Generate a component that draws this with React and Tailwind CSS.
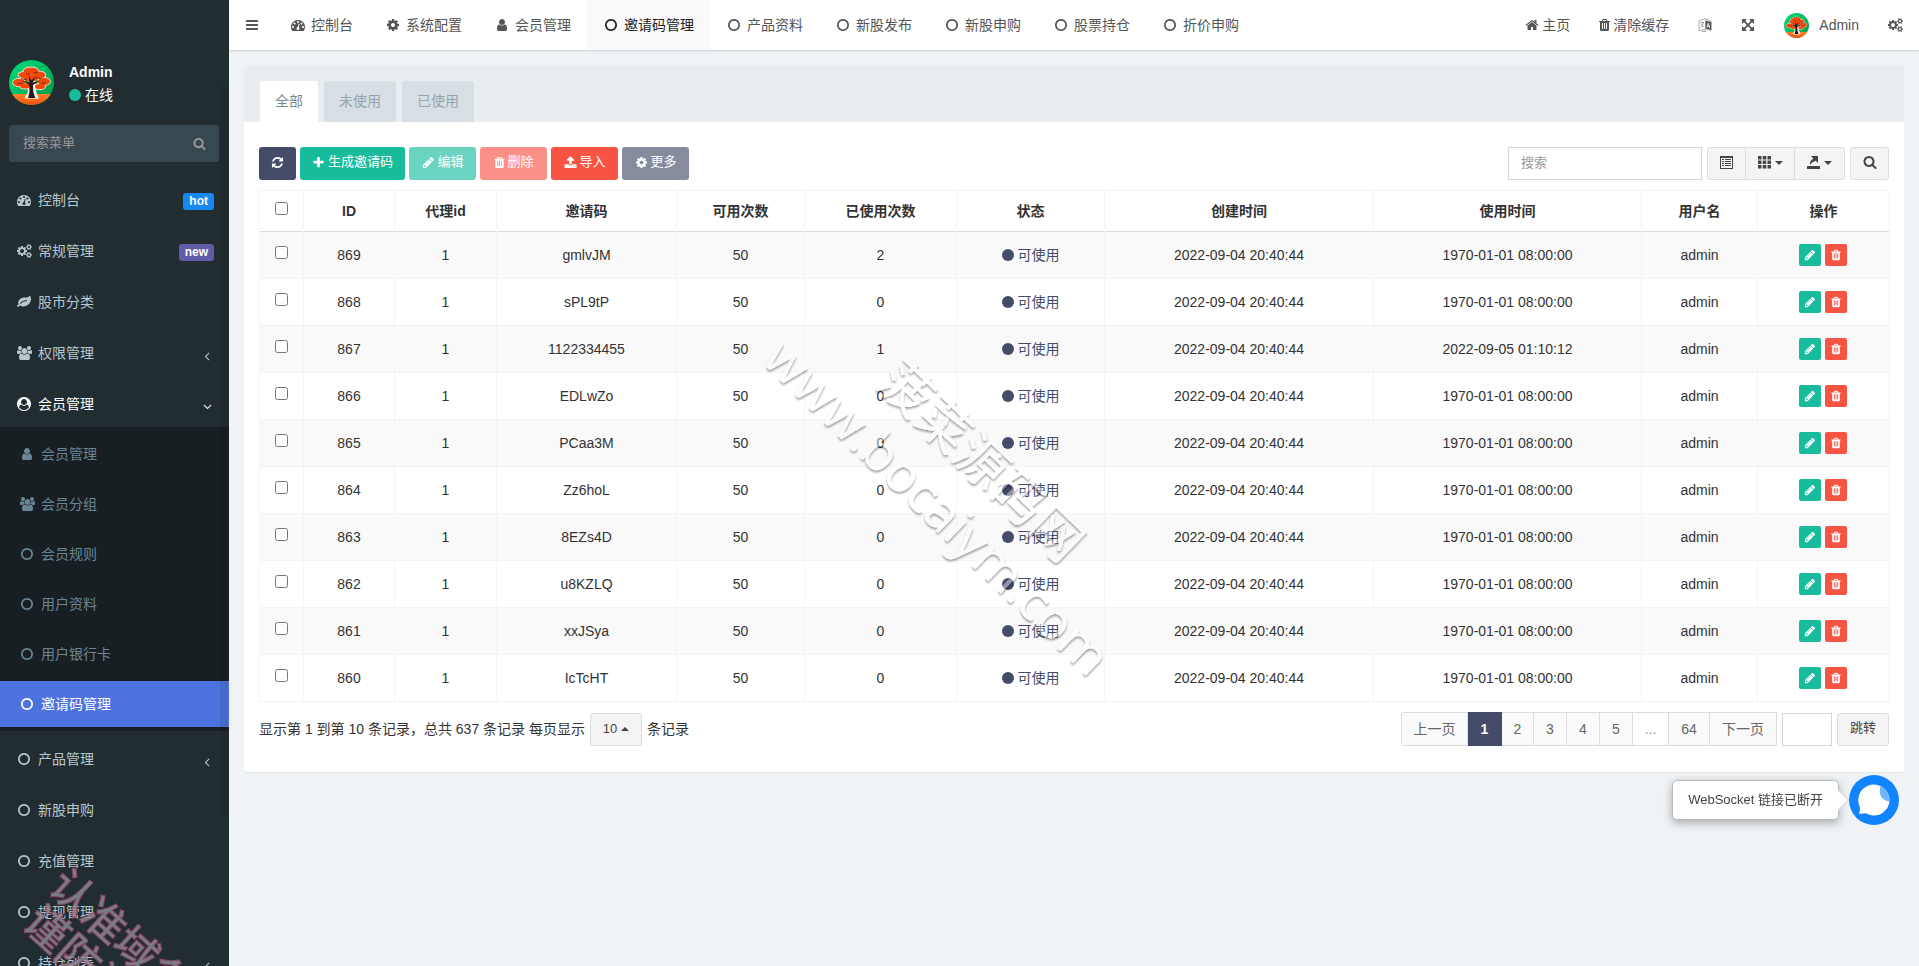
import { useState } from 'react';
import clsx from 'clsx';

// 14px wide glyphs on a 1792 unit grid
const PATHS = {
  dashboard: 'M384 1152q0-53-37.5-90.5t-90.5-37.5-90.5 37.5-37.5 90.5 37.5 90.5 90.5 37.5 90.5-37.5 37.5-90.5zm192-448q0-53-37.5-90.5t-90.5-37.5-90.5 37.5-37.5 90.5 37.5 90.5 90.5 37.5 90.5-37.5 37.5-90.5zm428 481l101-382q6-26-7.5-48.5t-38.5-29.5-48 6.5-30 39.5l-101 382q-60 5-107 43.5t-63 98.5q-20 77 20 146t117 89 146-20 89-117q16-60-6-117t-72-91zm660-33q0-53-37.5-90.5t-90.5-37.5-90.5 37.5-37.5 90.5 37.5 90.5 90.5 37.5 90.5-37.5 37.5-90.5zm-640-640q0-53-37.5-90.5t-90.5-37.5-90.5 37.5-37.5 90.5 37.5 90.5 90.5 37.5 90.5-37.5 37.5-90.5zm448 192q0-53-37.5-90.5t-90.5-37.5-90.5 37.5-37.5 90.5 37.5 90.5 90.5 37.5 90.5-37.5 37.5-90.5zm320 448q0 261-141 483-19 29-54 29h-1402q-35 0-54-29-141-221-141-483 0-182 71-348t191-286 286-191 348-71 348 71 286 191 191 286 71 348z',
  cog: 'M1152 896q0-106-75-181t-181-75-181 75-75 181 75 181 181 75 181-75 75-181zm512-109v222q0 12-8 23t-20 13l-185 28q-19 54-39 91 35 50 107 138 10 12 10 25t-9 23q-27 37-99 108t-94 71q-12 0-26-9l-138-108q-44 23-91 38-16 136-29 186-7 28-36 28h-222q-14 0-24.5-8.5t-11.5-21.5l-28-184q-49-16-90-37l-141 107q-10 9-25 9-14 0-25-11-126-114-165-168-7-10-7-23 0-12 8-23 15-21 51-66.5t54-70.5q-27-50-41-99l-183-27q-13-2-21-12.5t-8-23.5v-222q0-12 8-23t19-13l186-28q14-46 39-92-40-57-107-138-10-12-10-24 0-10 9-23 26-36 98.5-107.5t94.5-71.5q13 0 26 10l138 107q44-23 91-38 16-136 29-186 7-28 36-28h222q14 0 24.5 8.5t11.5 21.5l28 184q49 16 90 37l142-107q9-9 24-9 13 0 25 10 129 119 165 170 7 8 7 22 0 12-8 23-15 21-51 66.5t-54 70.5q26 50 41 98l183 28q13 2 21 12.5t8 23.5z',
  cogs: 'M896 896q0-106-75-181t-181-75-181 75-75 181 75 181 181 75 181-75 75-181zm768 512q0-52-38-90t-90-38-90 38-38 90q0 53 37.5 90.5t90.5 37.5 90.5-37.5 37.5-90.5zm0-1024q0-52-38-90t-90-38-90 38-38 90q0 53 37.5 90.5t90.5 37.5 90.5-37.5 37.5-90.5zm-384 421v185q0 10-7 19.5t-16 10.5l-155 24q-11 35-32 76 34 48 90 115 7 11 7 20 0 12-7 19-23 30-82.5 89.5t-78.5 59.5q-11 0-21-7l-115-90q-37 19-77 31-11 108-23 155-7 24-30 24h-186q-11 0-20-7.5t-10-17.5l-23-153q-34-10-75-31l-118 89q-7 7-20 7-11 0-21-8-144-133-144-160 0-9 7-19 10-14 41-53t47-61q-23-44-35-82l-152-24q-10-1-17-9.5t-7-19.5v-185q0-10 7-19.5t16-10.5l155-24q11-35 32-76-34-48-90-115-7-11-7-20 0-12 7-20 22-30 82-89t79-59q11 0 21 7l115 90q34-18 77-32 11-108 23-154 7-24 30-24h186q11 0 20 7.5t10 17.5l23 153q34 10 75 31l118-89q8-7 20-7 11 0 21 8 144 133 144 160 0 8-7 19-12 16-42 54t-45 60q23 48 34 82l152 23q10 2 17 10.5t7 19.5zm640 533v140q0 16-149 31-12 27-30 52 51 113 51 138 0 4-4 7-122 71-124 71-8 0-46-47t-52-68q-20 2-30 2t-30-2q-14 21-52 68t-46 47q-2 0-124-71-4-3-4-7 0-25 51-138-18-25-30-52-149-15-149-31v-140q0-16 149-31 13-29 30-52-51-113-51-138 0-4 4-7 4-2 35-20t59-34 30-16q8 0 46 46.5t52 67.5q20-2 30-2t30 2q51-71 92-112l6-2q4 0 124 70 4 3 4 7 0 25-51 138 17 23 30 52 149 15 149 31zm0-1024v140q0 16-149 31-12 27-30 52 51 113 51 138 0 4-4 7-122 71-124 71-8 0-46-47t-52-68q-20 2-30 2t-30-2q-14 21-52 68t-46 47q-2 0-124-71-4-3-4-7 0-25 51-138-18-25-30-52-149-15-149-31v-140q0-16 149-31 13-29 30-52-51-113-51-138 0-4 4-7 4-2 35-20t59-34 30-16q8 0 46 46.5t52 67.5q20-2 30-2t30 2q51-71 92-112l6-2q4 0 124 70 4 3 4 7 0 25-51 138 17 23 30 52 149 15 149 31z',
  leaf: 'M1280 704q0-26-19-45t-45-19q-172 0-318 49.5t-259.5 134-235.5 219.5q-19 21-19 45 0 26 19 45t45 19q24 0 45-19 27-24 74-71t67-66q137-124 268.5-176t313.5-52q26 0 45-19t19-45zm512-198q0 95-20 193-46 224-184.5 383t-357.5 268q-214 108-438 108-148 0-286-47-15-5-88-42t-96-37q-16 0-39.5 32t-45 70-52.5 70-60 32q-43 0-63.5-17.5t-45.5-59.5q-2-4-6-11t-5.5-10-3-9.5-1.5-13.5q0-35 31-73.5t68-65.5 68-56 31-48q0-4-14-38t-16-44q-9-51-9-104 0-115 43.5-220t119-184.5 170.5-139 204-95.5q55-18 145-25.5t179.5-9 178.5-6 163.5-24 113.5-56.5l29.5-29.5 29.5-28 27-20 36.5-16 43.5-4.5q39 0 70.5 46t47.5 112 24 124 8 96z',
  users: 'M657 896q-162 5-265 128h-134q-82 0-138-40.5t-56-118.5q0-353 124-353 6 0 43.5 21t97.5 42.5 119 21.5q67 0 133-23-5 37-5 66 0 159 90 256zm1071 637q0 120-73 189.5t-194 69.5h-874q-121 0-194-69.5t-73-189.5q0-53 3.5-103.5t14-109 26.5-108.5 43-97.5 62-81 85.5-53.5 111.5-20q10 0 43 21.5t73 48 107 48 135 21.5 135-21.5 107-48 73-48 43-21.5q61 0 111.5 20t85.5 53.5 62 81 43 97.5 26.5 108.5 14 109 3.5 103.5zm-1024-1277q0 106-75 181t-181 75-181-75-75-181 75-181 181-75 181 75 75 181zm704 384q0 159-112.5 271.5t-271.5 112.5-271.5-112.5-112.5-271.5 112.5-271.5 271.5-112.5 271.5 112.5 112.5 271.5zm576 225q0 78-56 118.5t-138 40.5h-134q-103-123-265-128 90-97 90-256 0-29-5-66 66 23 133 23 59 0 119-21.5t97.5-42.5 43.5-21q124 0 124 353zm-128-609q0 106-75 181t-181 75-181-75-75-181 75-181 181-75 181 75 75 181z',
  user: 'M1536 1399q0 109-62.5 187t-150.5 78h-854q-88 0-150.5-78t-62.5-187q0-85 8.5-160.5t31.5-152 58.5-131 94-89 134.5-34.5q131 128 313 128t313-128q76 0 134.5 34.5t94 89 58.5 131 31.5 152 8.5 160.5zm-256-887q0 159-112.5 271.5t-271.5 112.5-271.5-112.5-112.5-271.5 112.5-271.5 271.5-112.5 271.5 112.5 112.5 271.5z',
  userCircle: 'M1523 1339q-22-155-87.5-257.5t-184.5-118.5q-67 74-159.5 115.5t-195.5 41.5-195.5-41.5-159.5-115.5q-119 16-184.5 118.5t-87.5 257.5q106 150 271 237.5t356 87.5 356-87.5 271-237.5zm-243-699q0-159-112.5-271.5t-271.5-112.5-271.5 112.5-112.5 271.5 112.5 271.5 271.5 112.5 271.5-112.5 112.5-271.5zm512 256q0 182-71 347.5t-190.5 286-285.5 191.5-349 71q-182 0-348-71t-286-191-191-286-71-348 71-348 191-286 286-191 348-71 348 71 286 191 191 286 71 348z',
  circle: 'M896 352q-148 0-273 73t-198 198-73 273 73 273 198 198 273 73 273-73 198-198 73-273-73-273-198-198-273-73zm768 544q0 209-103 385.5t-279.5 279.5-385.5 103-385.5-103-279.5-279.5-103-385.5 103-385.5 279.5-279.5 385.5-103 385.5 103 279.5 279.5 103 385.5z',
  refresh: 'M1639 1056q0 5-1 7-64 268-268 434.5t-478 166.5q-146 0-282.5-55t-243.5-157l-129 129q-19 19-45 19t-45-19-19-45v-448q0-26 19-45t45-19h448q26 0 45 19t19 45-19 45l-137 137q71 66 161 102t187 36q134 0 250-65t186-179q11-17 53-117 8-23 30-23h192q13 0 22.5 9.5t9.5 22.5zm25-800v448q0 26-19 45t-45 19h-448q-26 0-45-19t-19-45 19-45l138-138q-148-137-349-137-134 0-250 65t-186 179q-11 17-53 117-8 23-30 23h-199q-13 0-22.5-9.5t-9.5-22.5v-7q65-268 270-434.5t480-166.5q146 0 284 55.5t245 156.5l130-129q19-19 45-19t45 19 19 45z',
  plus: 'M1600 736v192q0 40-28 68t-68 28h-416v416q0 40-28 68t-68 28h-192q-40 0-68-28t-28-68v-416h-416q-40 0-68-28t-28-68v-192q0-40 28-68t68-28h416v-416q0-40 28-68t68-28h192q40 0 68 28t28 68v416h416q40 0 68 28t28 68z',
  pencil: 'M491 1536l91-91-235-235-91 91v107h128v128h107zm523-928q0-22-22-22-10 0-17 7l-542 542q-7 7-7 17 0 22 22 22 10 0 17-7l542-542q7-7 7-17zm-54-192l416 416-832 832h-416v-416zm683 96q0 53-37 90l-166 166-416-416 166-165q36-38 90-38 53 0 91 38l235 234q37 39 37 91z',
  trash: 'M704 1376v-704q0-14-9-23t-23-9h-64q-14 0-23 9t-9 23v704q0 14 9 23t23 9h64q14 0 23-9t9-23zm256 0v-704q0-14-9-23t-23-9h-64q-14 0-23 9t-9 23v704q0 14 9 23t23 9h64q14 0 23-9t9-23zm256 0v-704q0-14-9-23t-23-9h-64q-14 0-23 9t-9 23v704q0 14 9 23t23 9h64q14 0 23-9t9-23zm-544-992h448l-48-117q-7-9-17-11h-317q-10 2-17 11zm928 32v64q0 14-9 23t-23 9h-96v948q0 83-47 143.5t-113 60.5h-832q-66 0-113-58.5t-47-141.5v-952h-96q-14 0-23-9t-9-23v-64q0-14 9-23t23-9h309l70-167q15-37 54-63t79-26h320q40 0 79 26t54 63l70 167h309q14 0 23 9t9 23z',
  upload: 'M1344 1472q0-26-19-45t-45-19-45 19-19 45 19 45 45 19 45-19 19-45zm256 0q0-26-19-45t-45-19-45 19-19 45 19 45 45 19 45-19 19-45zm128-224v320q0 40-28 68t-68 28h-1472q-40 0-68-28t-28-68v-320q0-40 28-68t68-28h427q21 56 70.5 92t110.5 36h256q61 0 110.5-36t70.5-92h427q40 0 68 28t28 68zm-325-648q-17 40-59 40h-256v448q0 26-19 45t-45 19h-256q-26 0-45-19t-19-45v-448h-256q-42 0-59-40-17-39 14-69l448-448q18-19 45-19t45 19l448 448q31 30 14 69z',
  home: 'M1472 992v480q0 26-19 45t-45 19h-384v-384h-256v384h-384q-26 0-45-19t-19-45v-480q0-1 .5-3t.5-3l575-474 575 474q1 2 1 6zm223-69l-62 74q-8 9-21 11h-3q-13 0-21-7l-692-577-692 577q-12 8-24 7-13-2-21-11l-62-74q-8-10-7-23.5t11-21.5l719-599q32-26 76-26t76 26l244 204v-195q0-14 9-23t23-9h192q14 0 23 9t9 23v408l219 182q10 8 11 21.5t-7 23.5z',
  bars: 'M1664 1344v128q0 26-19 45t-45 19h-1408q-26 0-45-19t-19-45v-128q0-26 19-45t45-19h1408q26 0 45 19t19 45zm0-512v128q0 26-19 45t-45 19h-1408q-26 0-45-19t-19-45v-128q0-26 19-45t45-19h1408q26 0 45 19t19 45zm0-512v128q0 26-19 45t-45 19h-1408q-26 0-45-19t-19-45v-128q0-26 19-45t45-19h1408q26 0 45 19t19 45z',
  arrows: 'M1411 541l-355 355 355 355 144-144q29-31 70-14 39 17 39 59v448q0 26-19 45t-45 19h-448q-42 0-59-40-17-39 14-69l144-144-355-355-355 355 144 144q31 30 14 69-17 40-59 40h-448q-26 0-45-19t-19-45v-448q0-42 40-59 39-17 69 14l144 144 355-355-355-355-144 144q-19 19-45 19-12 0-24-5-40-17-40-59v-448q0-26 19-45t45-19h448q42 0 59 40 17 39-14 69l-144 144 355 355 355-355-144-144q-31-30-14-69 17-40 59-40h448q26 0 45 19t19 45v448q0 42-39 59-13 5-25 5-26 0-45-19z',
  search: 'M1216 832q0-185-131.5-316.5t-316.5-131.5-316.5 131.5-131.5 316.5 131.5 316.5 316.5 131.5 316.5-131.5 131.5-316.5zm512 832q0 52-38 90t-90 38q-54 0-90-38l-343-342q-179 124-399 124-143 0-273.5-55.5t-225-150-150-225-55.5-273.5 55.5-273.5 150-225 225-150 273.5-55.5 273.5 55.5 225 150 150 225 55.5 273.5q0 220-124 399l343 343q37 37 37 90z',
  angle: 'M1203 544q0 13-10 23l-393 393 393 393q10 10 10 23t-10 23l-50 50q-10 10-23 10t-23-10l-466-466q-10-10-10-23t10-23l466-466q10-10 23-10t23 10l50 50q10 10 10 23z',
};

const BOXES = {
  cogs: '0 0 1920 1792',
  users: '64 0 1920 1792',
  trash: '192 0 1408 1792',
};

function Icon({ name, className = 'size-[14px]' }) {
  return (
    <svg viewBox={BOXES[name] || '0 0 1792 1792'} fill="currentColor" className={clsx('shrink-0', className)} aria-hidden="true">
      <path d={PATHS[name]} />
    </svg>
  );
}

// Fixed-width slot so labels line up whatever the glyph is
function MenuIcon({ name }) {
  return (
    <span className="flex w-[18px] shrink-0 justify-center">
      <Icon name={name} className={name === 'cogs' || name === 'users' ? 'h-[14px] w-[15px]' : 'size-[14px]'} />
    </span>
  );
}

function Avatar({ id, className }) {
  return (
    <svg viewBox="0 0 45 45" className={clsx('shrink-0 rounded-full', className)} role="img" aria-label="Admin">
      <defs>
        <linearGradient id={`${id}-g`} x1="0" y1="0" x2="1" y2="1">
          <stop offset="0" stopColor="#00e07d" />
          <stop offset="1" stopColor="#009444" />
        </linearGradient>
        <linearGradient id={`${id}-o`} x1="0" y1="0" x2="0" y2="1">
          <stop offset="0" stopColor="#fb8228" />
          <stop offset="1" stopColor="#f0500c" />
        </linearGradient>
      </defs>
      <rect width="45" height="45" fill={`url(#${id}-g)`} />
      <rect y="34" width="45" height="11" fill={`url(#${id}-o)`} />
      <g fill="#fff" stroke="#f6ece0" strokeWidth="1.6" strokeLinejoin="round">
        <ellipse cx="22" cy="11" rx="7.5" ry="3.6" />
        <ellipse cx="15.500" cy="15" rx="6" ry="3.200" />
        <ellipse cx="30" cy="15" rx="6.500" ry="3.500" />
        <ellipse cx="10" cy="22.500" rx="6" ry="3.800" />
        <ellipse cx="35" cy="21.500" rx="6" ry="3.800" />
        <ellipse cx="16" cy="26" rx="5" ry="2.600" />
        <ellipse cx="31" cy="26.500" rx="5" ry="2.600" />
        <path d="M20 20h6l.5 12 2.500 6h-12.500l3-6z" />
      </g>
      <g fill="#f4480b">
        <ellipse cx="22" cy="11" rx="7.500" ry="3.600" />
        <ellipse cx="15.500" cy="15" rx="6" ry="3.200" />
        <ellipse cx="30" cy="15" rx="6.500" ry="3.500" />
        <ellipse cx="22" cy="18" rx="7" ry="3.600" />
        <ellipse cx="10" cy="22.500" rx="6" ry="3.800" />
        <ellipse cx="35" cy="21.500" rx="6" ry="3.800" />
        <ellipse cx="16" cy="26" rx="5" ry="2.600" />
        <ellipse cx="31" cy="26.500" rx="5" ry="2.600" />
      </g>
      <path d="M19 38l1.500-6-.3-7-7-4.500 7 2-.2-7 2 5 5-4-3.500 6 8-2-7.500 4.500.3 7 2 6z" fill="#231815" />
      <path d="M12 18.500l6 1.500M27 17l5 2M17 13l4 2M25 13l4-1M8 24l6-1M32 24l5-2" stroke="#5a2415" strokeWidth=".8" />
    </svg>
  );
}

const Caret = ({ up }) => (
  <span
    className={clsx(
      'inline-block size-0 border-x-4 border-x-transparent',
      up ? 'border-b-4 border-b-current' : 'border-t-4 border-t-current'
    )}
  />
);

const mainMenu = [
  { label: '控制台', icon: 'dashboard', badge: 'hot' },
  { label: '常规管理', icon: 'cogs', badge: 'new' },
  { label: '股市分类', icon: 'leaf' },
  { label: '权限管理', icon: 'users', arrow: true },
  {
    label: '会员管理',
    icon: 'userCircle',
    open: true,
    children: [
      { label: '会员管理', icon: 'user' },
      { label: '会员分组', icon: 'users' },
      { label: '会员规则', icon: 'circle' },
      { label: '用户资料', icon: 'circle' },
      { label: '用户银行卡', icon: 'circle' },
      { label: '邀请码管理', icon: 'circle', active: true },
    ],
  },
  { label: '产品管理', icon: 'circle', arrow: true },
  { label: '新股申购', icon: 'circle' },
  { label: '充值管理', icon: 'circle' },
  { label: '提现管理', icon: 'circle' },
  { label: '持仓列表', icon: 'circle', arrow: true },
];

const navTabs = [
  { label: '控制台', icon: 'dashboard' },
  { label: '系统配置', icon: 'cog' },
  { label: '会员管理', icon: 'user' },
  { label: '邀请码管理', icon: 'circle', active: true },
  { label: '产品资料', icon: 'circle' },
  { label: '新股发布', icon: 'circle' },
  { label: '新股申购', icon: 'circle' },
  { label: '股票持仓', icon: 'circle' },
  { label: '折价申购', icon: 'circle' },
];

const rows = [
  { id: 869, code: 'gmlvJM', used: 2, usedAt: '1970-01-01 08:00:00' },
  { id: 868, code: 'sPL9tP', used: 0, usedAt: '1970-01-01 08:00:00' },
  { id: 867, code: '1122334455', used: 1, usedAt: '2022-09-05 01:10:12' },
  { id: 866, code: 'EDLwZo', used: 0, usedAt: '1970-01-01 08:00:00' },
  { id: 865, code: 'PCaa3M', used: 0, usedAt: '1970-01-01 08:00:00' },
  { id: 864, code: 'Zz6hoL', used: 0, usedAt: '1970-01-01 08:00:00' },
  { id: 863, code: '8EZs4D', used: 0, usedAt: '1970-01-01 08:00:00' },
  { id: 862, code: 'u8KZLQ', used: 0, usedAt: '1970-01-01 08:00:00' },
  { id: 861, code: 'xxJSya', used: 0, usedAt: '1970-01-01 08:00:00' },
  { id: 860, code: 'IcTcHT', used: 0, usedAt: '1970-01-01 08:00:00' },
];

const columns = [
  { label: 'ID', width: 'w-[91px]' },
  { label: '代理id', width: 'w-[102px]' },
  { label: '邀请码', width: 'w-[180px]' },
  { label: '可用次数', width: 'w-[128px]' },
  { label: '已使用次数', width: 'w-[152px]' },
  { label: '状态', width: 'w-[148px]' },
  { label: '创建时间', width: 'w-[269px]' },
  { label: '使用时间', width: 'w-[268px]' },
  { label: '用户名', width: 'w-[116px]' },
  { label: '操作', width: 'w-[132px]' },
];

function Sidebar() {
  return (
    <aside className="relative h-screen w-[229px] shrink-0 overflow-hidden bg-[#222d32] pt-[60px] text-[#b8c7ce]">
      <div className="flex items-start gap-[15px] pl-[9px]">
        <Avatar id="side" className="size-[45px]" />
        <div className="text-white">
          <p className="font-bold leading-6">Admin</p>
          <a href="#" className="flex items-center gap-1 leading-[22px]">
            <span className="size-3 rounded-full bg-[#18bc9c]" />
            在线
          </a>
        </div>
      </div>

      <form className="mt-[19px] mr-[10px] ml-[9px] flex h-[37px] rounded-[3px] bg-[#374850] text-[#999]">
        <input
          type="text"
          aria-label="搜索菜单"
          placeholder="搜索菜单"
          className="min-w-0 flex-1 px-[14px] text-[13px] placeholder:text-[#999] focus:outline-none"
        />
        <button type="button" aria-label="搜索" className="px-[13px]">
          <Icon name="search" className="size-[13px]" />
        </button>
      </form>

      <ul className="mt-[14px] flex flex-col gap-1">
        {mainMenu.map((item) => (
          <li key={item.label}>
            <a
              href="#"
              className={clsx('flex h-[47px] items-center gap-[5px] pr-[15px] pl-[15px]', item.open && 'text-white')}
            >
              <MenuIcon name={item.icon} />
              <span className="flex-1">{item.label}</span>
              {item.badge && (
                <span
                  className={clsx(
                    'mt-[3px] rounded-[3px] px-[6px] text-xs leading-[17px] font-bold text-white',
                    item.badge === 'hot' ? 'bg-[#1688f1]' : 'bg-[#605ca8]'
                  )}
                >
                  {item.badge}
                </span>
              )}
              {(item.arrow || item.open) && (
                <Icon name="angle" className={clsx('mt-[7px] size-[14px]', item.open && '-rotate-90')} />
              )}
            </a>
            {item.children && (
              <ul className="flex flex-col gap-1 bg-[#181f23] py-1 text-[#698697]">
                {item.children.map((sub) => (
                  <li key={sub.label}>
                    <a
                      href="#"
                      className={clsx('flex h-[46px] items-center gap-[5px] pl-[18px]', sub.active && 'bg-[#4e73df] text-white')}
                    >
                      <MenuIcon name={sub.icon} />
                      {sub.label}
                    </a>
                  </li>
                ))}
              </ul>
            )}
          </li>
        ))}
      </ul>

      {/* scrollbar thumb */}
      <div className="absolute top-[84px] right-px h-[732px] w-2 rounded bg-black/8" />
    </aside>
  );
}

function Header() {
  return (
    <header className="relative z-10 flex h-[50px] items-center justify-between bg-white text-[#555] shadow-[0_1px_2px_rgba(0,0,0,0.15)]">
      <nav className="flex h-full items-center">
        <button type="button" aria-label="切换菜单" className="flex h-full w-[45px] items-center justify-center">
          <Icon name="bars" />
        </button>
        {navTabs.map((tab) => (
          <a
            key={tab.label}
            href="#"
            className={clsx(
              'flex h-full items-center gap-1 pr-4 pl-[15px]',
              tab.active && 'bg-[#f9f9f9] text-[#222]'
            )}
          >
            <MenuIcon name={tab.icon} />
            {tab.label}
          </a>
        ))}
      </nav>
      <div className="flex h-full items-center gap-[29px] pr-4">
        <a href="#" className="flex items-center gap-[3px]">
          <Icon name="home" />
          主页
        </a>
        <a href="#" className="flex items-center gap-[3px]">
          <Icon name="trash" className="h-[14px] w-[11px]" />
          清除缓存
        </a>
        <button type="button" aria-label="语言">
          <svg viewBox="0 0 14 14" className="size-[14px]" aria-hidden="true">
            <path d="M1 2.500L8 .7V11L1 12.800zM8 11l5 1.500V3L8 1.200" fill="#fff" stroke="#999" strokeWidth=".8" />
            <path d="M7.500 2.800L13.300 4v8L7.500 10.500z" fill="#555" />
            <path d="M9 9.300l1.300-4 1.500 4.800M9.500 8l2 .5" fill="none" stroke="#fff" strokeWidth=".9" />
            <path d="M2.500 5l3.500-.8M4 3.800v1M5.500 4.600Q5 8 2.500 9.500M3 6.500L5.800 9" fill="none" stroke="#888" strokeWidth=".8" />
            <path d="M4 13.300h4l-.8-.8" fill="none" stroke="#777" strokeWidth=".8" />
          </svg>
        </button>
        <button type="button" aria-label="全屏">
          <Icon name="arrows" />
        </button>
        <a href="#" className="flex items-center gap-[10px]">
          <Avatar id="top" className="size-[25px]" />
          Admin
        </a>
        <button type="button" aria-label="设置">
          <Icon name="cogs" className="h-[14px] w-[15px]" />
        </button>
      </div>
    </header>
  );
}

function ToolButton({ icon, color, children, label }) {
  return (
    <button
      type="button"
      aria-label={label}
      className={clsx('flex h-[33px] items-center justify-center gap-[3px] rounded-[3px] pb-[2px] text-[13px] text-white', color)}
    >
      <Icon
        name={icon}
        className={icon === 'trash' ? 'h-[13px] w-[11px]' : 'size-[13px]'}
      />
      {children}
    </button>
  );
}

function Toolbar() {
  const groupBtn = 'flex h-full items-center justify-center gap-1 pb-[2px]';
  return (
    <div className="flex flex-wrap items-center justify-between gap-y-2">
      <div className="flex gap-1">
        <ToolButton icon="refresh" color="w-[37px] bg-[#444c69]" label="刷新" />
        <ToolButton icon="plus" color="px-3 bg-[#18bc9c]">生成邀请码</ToolButton>
        <ToolButton icon="pencil" color="w-[67px] bg-[#6bd4c0]">编辑</ToolButton>
        <ToolButton icon="trash" color="w-[67px] bg-[#fb9186]">删除</ToolButton>
        <ToolButton icon="upload" color="w-[67px] bg-[#f75444]">导入</ToolButton>
        <ToolButton icon="cog" color="w-[67px] bg-[#868b9e]">更多</ToolButton>
      </div>
      <div className="flex h-[33px] gap-[5px] text-[#444]">
        <input
          type="text"
          aria-label="搜索"
          placeholder="搜索"
          className="w-[194px] border border-[#d2d6de] px-3 text-[13px] placeholder:text-[#999] focus:outline-none"
        />
        <div className="flex divide-x divide-[#ddd] overflow-hidden rounded-[3px] border border-[#ddd] bg-[#f4f4f4]">
          <button type="button" aria-label="切换视图" className={clsx(groupBtn, 'w-[38px]')}>
            <svg viewBox="0 0 13 13" className="size-[13px]" fill="currentColor" aria-hidden="true">
              <path fillRule="evenodd" d="M0 0h13v13H0zM1 2v10h11V2zM2 3h2v1H2zM5 3h6v1H5zM2 5h2v1H2zM5 5h6v1H5zM2 7h2v1H2zM5 7h6v1H5zM2 9h2v1H2zM5 9h6v1H5z" />
            </svg>
          </button>
          <button type="button" aria-label="列" className={clsx(groupBtn, 'w-[49px]')}>
            <svg viewBox="0 0 13 13" className="size-[13px]" fill="currentColor" aria-hidden="true">
              <path d="M0 0h3.500v3.500H0zM4.700 0h3.600v3.500H4.700zM9.500 0H13v3.500H9.500zM0 4.500h3.500V8H0zM4.700 4.500h3.600V8H4.700zM9.500 4.500H13V8H9.500zM0 9h3.500v3.500H0zM4.700 9h3.600v3.500H4.700zM9.500 9H13v3.500H9.500z" />
            </svg>
            <Caret />
          </button>
          <button type="button" aria-label="导出数据" className={clsx(groupBtn, 'w-[49px]')}>
            <svg viewBox="0 0 13 13" className="size-[13px]" fill="currentColor" aria-hidden="true">
              <path d="M0 10h13v3H0zM4 0h7v7L8.800 4.800Q5 5.800 3 9 2.500 4.500 6.400 2.400z" />
            </svg>
            <Caret />
          </button>
        </div>
        <button
          type="button"
          aria-label="普通搜索"
          className="flex w-[39px] items-center justify-center rounded-[3px] border border-[#ddd] bg-[#f4f4f4] pb-[3px]"
        >
          <Icon name="search" className="size-[14px]" />
        </button>
      </div>
    </div>
  );
}

function InviteTable() {
  const cell = 'border border-[#f4f4f4]';
  return (
    <table className="mt-[10px] w-full table-fixed border-collapse text-center text-[#333]">
      <thead>
        <tr className="h-[41px] border-b border-b-[#ddd]">
          <th className="w-[44px] border-x border-t border-[#f4f4f4]">
            <input type="checkbox" aria-label="全选" className="mb-[6px] size-[13px] align-middle" />
          </th>
          {columns.map((col) => (
            <th key={col.label} className={clsx('border-x border-t border-[#f4f4f4] font-bold', col.width)}>
              {col.label}
            </th>
          ))}
        </tr>
      </thead>
      <tbody>
        {rows.map((row) => (
          <tr key={row.id} className="h-[47px] odd:bg-[#f9f9f9]">
            <td className={clsx(cell, 'border-t-0')}>
              <input type="checkbox" aria-label={`选择 ${row.id}`} className="mb-[6px] size-[13px] align-middle" />
            </td>
            <td className={clsx(cell, 'border-t-0')}>{row.id}</td>
            <td className={clsx(cell, 'border-t-0')}>1</td>
            <td className={clsx(cell, 'border-t-0')}>{row.code}</td>
            <td className={clsx(cell, 'border-t-0')}>50</td>
            <td className={clsx(cell, 'border-t-0')}>{row.used}</td>
            <td className={clsx(cell, 'border-t-0 text-[#444c69]')}>
              <span className="flex items-center justify-center gap-1">
                <span className="size-3 rounded-full bg-[#444c69]" />
                可使用
              </span>
            </td>
            <td className={clsx(cell, 'border-t-0')}>2022-09-04 20:40:44</td>
            <td className={clsx(cell, 'border-t-0')}>{row.usedAt}</td>
            <td className={clsx(cell, 'border-t-0')}>admin</td>
            <td className={clsx(cell, 'border-t-0')}>
              <div className="flex justify-center gap-1 pr-[2px] text-white">
                <button type="button" aria-label="编辑" className="flex size-[22px] items-center justify-center rounded-[2px] bg-[#18bc9c]">
                  <Icon name="pencil" className="size-3" />
                </button>
                <button type="button" aria-label="删除" className="flex size-[22px] items-center justify-center rounded-[2px] bg-[#f75444]">
                  <Icon name="trash" className="h-3 w-[10px]" />
                </button>
              </div>
            </td>
          </tr>
        ))}
      </tbody>
    </table>
  );
}

const pages = [
  { label: '上一页', width: 'w-[66px]' },
  { label: '1', width: 'w-[34px]', active: true },
  { label: '2', width: 'w-[32px]' },
  { label: '3', width: 'w-[33px]' },
  { label: '4', width: 'w-[33px]' },
  { label: '5', width: 'w-[33px]' },
  { label: '...', width: 'w-[36px]', disabled: true },
  { label: '64', width: 'w-[41px]' },
  { label: '下一页', width: 'w-[67px]' },
];

function Pagination() {
  return (
    <div className="mt-[10px] flex flex-wrap items-center justify-between text-[#333]">
      <div className="flex items-center gap-[5px]">
        <span>显示第 1 到第 10 条记录，总共 637 条记录 每页显示</span>
        <button
          type="button"
          className="flex h-[33px] w-[52px] items-center justify-center gap-1 rounded-[3px] border border-[#ddd] bg-[#f4f4f4] text-[13px] text-[#444]"
        >
          10 <Caret up />
        </button>
        <span>条记录</span>
      </div>
      <div className="flex items-center gap-[5px]">
        <ul className="flex overflow-hidden rounded-l-[3px] border-l border-[#ddd] text-[#666]">
          {pages.map((page) => (
            <li key={page.label}>
              <a
                href="#"
                className={clsx(
                  'flex h-[34px] items-center justify-center border-y border-r',
                  page.width,
                  page.active && 'border-[#444c69] bg-[#444c69] font-bold text-white',
                  page.disabled && 'border-[#ddd] bg-white text-[#999]',
                  !page.active && !page.disabled && 'border-[#ddd] bg-[#fafafa]'
                )}
              >
                {page.label}
              </a>
            </li>
          ))}
        </ul>
        <input type="text" aria-label="页码" className="h-[33px] w-[50px] border border-[#d2d6de] px-2 focus:outline-none" />
        <button type="button" className="h-[33px] w-[52px] rounded-[3px] border border-[#ddd] bg-[#f4f4f4] pb-[2px] text-[13px] text-[#444]">
          跳转
        </button>
      </div>
    </div>
  );
}

function ChatWidget() {
  return (
    <div className="fixed right-5 bottom-[141px] z-20 flex items-center gap-[10px]">
      <div className="relative rounded-[5px] border border-[#bbb] bg-white px-[15px] py-[9px] text-[13px] leading-5 text-[#444] shadow-[0_3px_10px_rgba(0,0,0,0.3)]">
        WebSocket 链接已断开
        <span className="absolute top-1/2 -right-2 size-[15px] -translate-y-1/2 rotate-45 border-t border-r border-[#ccc] bg-white" />
      </div>
      <button type="button" aria-label="在线客服" className="size-[50px] rounded-full bg-[#1184ff]">
        <svg viewBox="0 0 50 50" aria-hidden="true">
          <path d="M25 9.500a15.500 15.500 0 1 1-8 28.800q-3 .5-6.200.4-1-.3-.5-1.500 1-2 .7-5A15.500 15.500 0 0 1 25 9.500z" fill="#fff" />
          <path d="M31.500 11a15.500 15.500 0 0 1 9 15.500q-9-1.500-9.700-9-.1-3.500.7-6.500z" fill="#70b5ff" />
        </svg>
      </button>
    </div>
  );
}

function Watermark() {
  return (
    <>
      <svg
        viewBox="-300 -300 600 600"
        className="pointer-events-none fixed top-1/2 left-1/2 z-30 size-[600px] -translate-1/2 font-['Open_Sans','Noto_Sans_CJK_SC',sans-serif] text-[52px]"
        aria-hidden="true"
      >
        <filter id="emboss">
          <feGaussianBlur in="SourceAlpha" stdDeviation="0.8" />
          <feOffset dy="1.500" />
          <feComposite in2="SourceAlpha" operator="out" result="edge" />
          <feFlood floodColor="#000" floodOpacity="0.38" />
          <feComposite in2="edge" operator="in" result="shade" />
          <feComponentTransfer in="SourceGraphic" result="face">
            <feFuncA type="linear" slope="0.4" />
          </feComponentTransfer>
          <feMerge>
            <feMergeNode in="shade" />
            <feMergeNode in="face" />
          </feMerge>
        </filter>
        <g filter="url(#emboss)">
          <g transform="rotate(44)" fill="#fff" textAnchor="middle">
            <text y="-12">菠菜源码网</text>
            <text y="51">www.bocaiym.com</text>
          </g>
        </g>
      </svg>
      <svg
        viewBox="0 0 229 140"
        className="pointer-events-none fixed bottom-0 left-0 z-30 h-[140px] w-[229px] font-['Noto_Sans_CJK_SC',sans-serif] text-[43px] font-medium"
        aria-hidden="true"
      >
        <g
          transform="translate(73 66) rotate(42)"
          fill="#858d90"
          stroke="#a0466f"
          strokeWidth="1"
          opacity="0.85"
        >
          <text x="-22" y="16">认准域名</text>
          <text x="-16" y="60">谨防诈骗</text>
        </g>
      </svg>
    </>
  );
}

export default function App() {
  const [tab, setTab] = useState('全部');

  return (
    <div className="flex h-screen overflow-hidden bg-[#eff3f6] font-['Liberation_Sans','Noto_Sans_CJK_SC',sans-serif] text-sm">
      <Sidebar />
      <div className="flex min-w-0 flex-1 flex-col">
        <Header />
        <main className="flex-1 p-[15px]">
          <section className="rounded-[3px] bg-white shadow-[0_1px_1px_rgba(0,0,0,0.05)]">
            <div className="flex gap-[6px] rounded-t-[3px] bg-[#e8edf0] px-4 pt-4">
              {['全部', '未使用', '已使用'].map((name) => (
                <button
                  key={name}
                  type="button"
                  onClick={() => setTab(name)}
                  className={clsx(
                    'h-[41px] rounded-t-[3px] px-[15px] pb-px',
                    tab === name ? 'bg-white text-[#7b8a8b]' : 'bg-[#d8dfe4] text-[#95a5a6]'
                  )}
                >
                  {name}
                </button>
              ))}
            </div>
            <div className="px-[15px] pt-[25px] pb-[26px]">
              <Toolbar />
              <InviteTable />
              <Pagination />
            </div>
          </section>
        </main>
      </div>
      <ChatWidget />
      <Watermark />
    </div>
  );
}
